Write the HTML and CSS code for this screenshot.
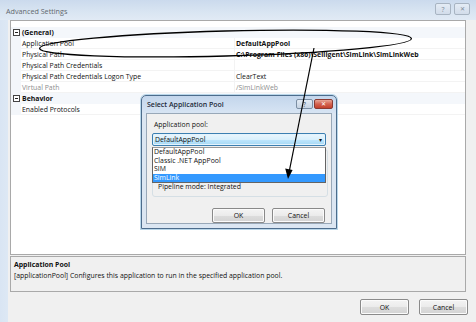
FILE: index.html
```html
<!DOCTYPE html>
<html>
<head>
<meta charset="utf-8">
<link rel="stylesheet" href="styles.css">
</head>
<body>
<div class="window">
  <div class="titlebar">
    <span class="title">Advanced Settings</span>
    <div class="caps">
      <span class="cap">?</span>
      <span class="cap capx">✕</span>
    </div>
  </div>
  <div class="client">
    <div class="grid">
      <div class="row cat"><span class="gut"><span class="tog"></span></span><span class="name">(General)</span><span class="val"></span></div>
      <div class="row"><span class="gut"></span><span class="name">Application Pool</span><span class="val b">DefaultAppPool</span></div>
      <div class="row"><span class="gut"></span><span class="name">Physical Path</span><span class="val b">C:\Program Files (x86)\Selligent\SimLink\SimLinkWeb</span></div>
      <div class="row"><span class="gut"></span><span class="name">Physical Path Credentials</span><span class="val"></span></div>
      <div class="row"><span class="gut"></span><span class="name">Physical Path Credentials Logon Type</span><span class="val">ClearText</span></div>
      <div class="row ro"><span class="gut"></span><span class="name">Virtual Path</span><span class="val">/SimLinkWeb</span></div>
      <div class="row cat"><span class="gut"><span class="tog"></span></span><span class="name">Behavior</span><span class="val"></span></div>
      <div class="row"><span class="gut"></span><span class="name">Enabled Protocols</span><span class="val"></span></div>
    </div>
    <div class="desc">
      <div class="desc-title">Application Pool</div>
      <div class="desc-text">[applicationPool] Configures this application to run in the specified application pool.</div>
    </div>
    <div class="actions">
      <span class="btn">OK</span>
      <span class="btn">Cancel</span>
    </div>
  </div>

  <div class="dialog">
    <div class="dtitle">
      <span class="dtext">Select Application Pool</span>
      <div class="dcaps">
        <span class="dcap">?</span>
        <span class="dcap dclose">✕</span>
      </div>
    </div>
    <div class="dbody">
      <div class="dlabel">Application pool:</div>
      <div class="combo"><span>DefaultAppPool</span><span class="caret">▾</span></div>
      <div class="groupwrap">
        <div class="list">
          <div class="item">DefaultAppPool</div>
          <div class="item">Classic .NET AppPool</div>
          <div class="item">SIM</div>
          <div class="item sel">SimLink</div>
        </div>
        <div class="group">
          <div class="gline">Pipeline mode: Integrated</div>
        </div>
      </div>
      <div class="dactions">
        <span class="btn dbtn">OK</span>
        <span class="btn dbtn">Cancel</span>
      </div>
    </div>
  </div>

  <svg class="annot" width="476" height="322" viewBox="0 0 476 322">
    <ellipse cx="225.5" cy="43.5" rx="186" ry="12.5" transform="rotate(-1.5 225.5 43.5)" fill="none" stroke="#000" stroke-width="1.3"/>
    <line x1="314" y1="48" x2="289.5" y2="170" stroke="#000" stroke-width="1.2"/>
    <polygon points="288,179 285.2,168.5 292.6,170" fill="#000"/>
  </svg>
</div>
</body>
</html>
```
FILE: styles.css
```css
* { box-sizing: border-box; }
html, body { margin: 0; padding: 0; }
body {
  width: 476px;
  height: 322px;
  overflow: hidden;
  font-family: "Open Sans", "Noto Sans", sans-serif;
  font-size: 6.9px;
  color: #111;
  background: #f0f0f0;
}
.window {
  position: relative;
  width: 476px;
  height: 322px;
  display: flex;
  flex-direction: column;
  background: linear-gradient(90deg, #d9e5f3 0px, #dde8f4 8px, #f0f0f0 8px);
}
.titlebar {
  height: 20px;
  flex: none;
  display: flex;
  align-items: center;
  justify-content: space-between;
  padding: 0 6px 0 6px;
  background: linear-gradient(180deg, #cbdaed 0%, #d9e5f2 60%, #e1eaf5 100%);
}
.title { color: #62676d; font-size: 7.2px; margin-top: 1px; }
.caps { display: flex; gap: 3px; margin-top: -2px; }
.cap {
  width: 16px; height: 12px;
  border: 1px solid #a8b4c2;
  border-radius: 2px;
  background: linear-gradient(180deg, #e4ecf5, #d2dcea);
  color: #7d8a99;
  font-size: 7px;
  display: flex; align-items: center; justify-content: center;
}
.capx { font-size: 6px; }
.client {
  flex: 1;
  display: flex;
  flex-direction: column;
  padding: 0 10px 0 10px;
}
.grid {
  height: 235px;
  border: 1px solid #a9a9a9;
  background: #fff;
  padding-top: 6px;
  flex: none;
}
.row {
  height: 11px;
  display: grid;
  grid-template-columns: 10px 214px 1fr;
  align-items: center;
}
.row .gut {
  height: 11px;
  background: #f3f6fa;
  display: flex;
  align-items: center;
  justify-content: center;
}
.row .name, .row .val {
  height: 11px;
  line-height: 11px;
  border-bottom: 1px solid #f3f3f3;
  white-space: nowrap;
  overflow: visible;
}
.row .name { padding-left: 1px; border-right: 1px solid #f3f3f3; }
.row .val { padding-left: 1px; }
.row.cat .name, .row.cat .val { background: #f4f7fb; border-color: #f4f7fb; }
.row.cat .name { font-weight: 700; }
.b { font-weight: 700; }
.row.ro .name, .row.ro .val { color: #8d8d8d; }
.tog {
  width: 7px; height: 7px;
  border: 1px solid #444;
  position: relative;
  background: #fff;
}
.tog::after {
  content: "";
  position: absolute;
  left: 1px; right: 1px; top: 2px;
  height: 1px;
  background: #222;
}
.desc {
  margin-top: 1px;
  height: 36px;
  border: 1px solid #a9a9a9;
  background: #f0f0f0;
  padding: 3px 3px;
  flex: none;
}
.desc-title { font-weight: 700; line-height: 10px; }
.desc-text { line-height: 11px; }
.actions {
  display: flex;
  justify-content: flex-end;
  gap: 10px;
  margin-top: 7px;
  margin-right: -2px;
}
.btn {
  width: 49px;
  height: 16px;
  border: 1px solid #8a8a8a;
  border-radius: 2px;
  background: linear-gradient(180deg, #f4f4f4 0%, #ebebeb 50%, #dddddd 51%, #d3d3d3 100%);
  display: flex;
  align-items: center;
  justify-content: center;
  color: #111;
  box-shadow: inset 0 0 0 1px #fbfbfb;
}
/* dialog */
.dialog {
  position: absolute;
  left: 141px;
  top: 95px;
  width: 196px;
  height: 134px;
  border: 1px solid #4c6c8c;
  border-radius: 5px 5px 0 0;
  background: linear-gradient(180deg, #c3d6ec 0px, #d7e4f3 17px, #dbe6f2 17px);
  padding: 0 4px 4px 4px;
  display: flex;
  flex-direction: column;
  box-shadow: 0 0 0 1px #b9d7ea;
}
.dtitle {
  height: 17px;
  display: flex;
  align-items: center;
  justify-content: space-between;
  padding-left: 1px;
  flex: none;
}
.dtext { font-weight: 600; color: #1d2a3a; font-size: 7px; }
.dcaps { display: flex; gap: 1px; margin-right: -1px; margin-top: -1px; }
.dcap {
  width: 17px; height: 10px;
  border: 1px solid #7b8ea3;
  border-radius: 2px;
  background: linear-gradient(180deg, #e3ebf4, #c6d3e2);
  font-size: 6.5px;
  color: #3c4d60;
  display: flex; align-items: center; justify-content: center;
}
.dclose {
  width: 19px;
  border-color: #8a3a32;
  background: linear-gradient(180deg, #e7a597 0%, #d4624f 50%, #c3402c 100%);
  color: #fff;
  font-size: 6px;
}
.dbody {
  flex: 1;
  background: #f0f0f0;
  border: 1px solid #98a8b8;
  padding: 6px 4px 0 5px;
  display: flex;
  flex-direction: column;
}
.dlabel { line-height: 9px; padding-left: 2px; }
.combo {
  margin-top: 4px;
  height: 13px;
  width: 174px;
  border: 1px solid #3c7fb1;
  border-radius: 2px;
  background: linear-gradient(180deg, #eaf6fd 0%, #d9f0fc 50%, #bee6fd 51%, #a7d9f5 100%);
  display: flex;
  align-items: center;
  justify-content: space-between;
  padding: 0 3px 0 2px;
  box-shadow: inset 0 0 0 1px #e4f3fc;
}
.caret { font-size: 6px; color: #111; }
.groupwrap {
  position: relative;
  margin-top: 1px;
  width: 176px;
  height: 50px;
}
.group {
  position: absolute;
  left: 0; right: 0; top: 2px; bottom: 0;
  border: 1px solid #d5dfe5;
  border-radius: 3px;
  padding: 32px 0 0 5px;
}
.gline { line-height: 9px; }
.list {
  position: absolute;
  z-index: 2;
  left: 0; top: 0;
  width: 174px;
  height: 36px;
  background: #fff;
  border: 1px solid #646464;
  border-top-color: #9a9a9a;
}
.item { height: 8.6px; line-height: 8.6px; padding-left: 1px; white-space: nowrap; }
.item.sel { background: #3399ff; color: #fff; }
.dactions {
  display: flex;
  justify-content: flex-end;
  gap: 7px;
  margin-top: 11px;
  margin-right: 2px;
}
.dbtn { width: 53px; height: 15px; }
.annot {
  position: absolute;
  z-index: 10;
  left: 0; top: 0;
  pointer-events: none;
}
```
